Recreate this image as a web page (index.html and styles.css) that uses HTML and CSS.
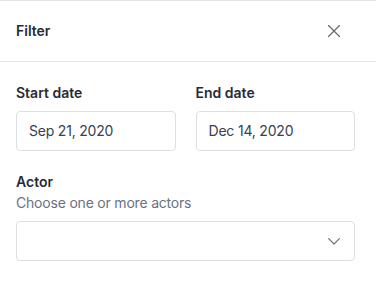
FILE: index.html
```
<!DOCTYPE html>
<html lang="en">
<head>
    <meta charset="UTF-8">
    <meta name="viewport" content="width=device-width, initial-scale=1.0">
    <link rel="stylesheet" href="styles.css">
    <title>Filter</title>
</head>
<body>
    <div class="panel">
        <header class="panel-header">
            <h2 class="panel-title">Filter</h2>
            <button class="close-btn" aria-label="Close">
                <svg width="12" height="12" viewBox="0 0 12 12" fill="none" stroke="#5f6672" stroke-width="1.2" stroke-linecap="round">
                    <path d="M0.5 0.5L11.5 11.5M11.5 0.5L0.5 11.5"/>
                </svg>
            </button>
        </header>
        <div class="panel-body">
            <div class="date-row">
                <div class="field">
                    <label class="field-label">Start date</label>
                    <div class="input">Sep 21, 2020</div>
                </div>
                <div class="field">
                    <label class="field-label">End date</label>
                    <div class="input">Dec 14, 2020</div>
                </div>
            </div>
            <div class="field actor-field">
                <label class="field-label">Actor</label>
                <p class="field-help">Choose one or more actors</p>
                <div class="input select">
                    <svg width="12" height="7" viewBox="0 0 12 7" fill="none" stroke="#6b7280" stroke-width="1.2" stroke-linecap="round" stroke-linejoin="round">
                        <path d="M0.6 0.6L6 6L11.4 0.6"/>
                    </svg>
                </div>
            </div>
        </div>
    </div>
</body>
</html>
```

FILE: styles.css
```
body {
    margin: 0;
    padding: 0;
    background: #fff;
    font-family: Inter, "Noto Sans", sans-serif;
    font-size: 14px;
    line-height: 20px;
    color: #1f2937;
}

.panel {
    border-top: 1px solid #e2e4e8;
}

.panel-header {
    height: 60px;
    display: flex;
    align-items: center;
    justify-content: space-between;
    padding: 0 16px;
    border-bottom: 1px solid #e5e7eb;
}

.panel-title {
    margin: 0;
    font-size: 14px;
    font-weight: 600;
    color: #272c33;
}

.close-btn {
    border: none;
    background: none;
    padding: 0;
    margin-right: 20px;
    width: 12px;
    height: 12px;
    display: flex;
    cursor: pointer;
}

.panel-body {
    padding: 21px 21px 0 16px;
}

.date-row {
    display: flex;
    gap: 20px;
}

.date-row .field {
    flex: 1;
}

.field-label {
    display: block;
    font-weight: 600;
    color: #272c33;
    margin-bottom: 8px;
}

.input {
    height: 38px;
    border: 1px solid #dcdfe3;
    border-radius: 4px;
    display: flex;
    align-items: center;
    padding: 0 12px;
    color: #374151;
    letter-spacing: -0.2px;
}

.actor-field {
    margin-top: 21px;
}

.actor-field .field-label {
    margin-bottom: 1px;
}

.field-help {
    margin: 0 0 8px;
    color: #6b7280;
    letter-spacing: -0.2px;
}

.select {
    justify-content: flex-end;
    padding-right: 14px;
}
```
